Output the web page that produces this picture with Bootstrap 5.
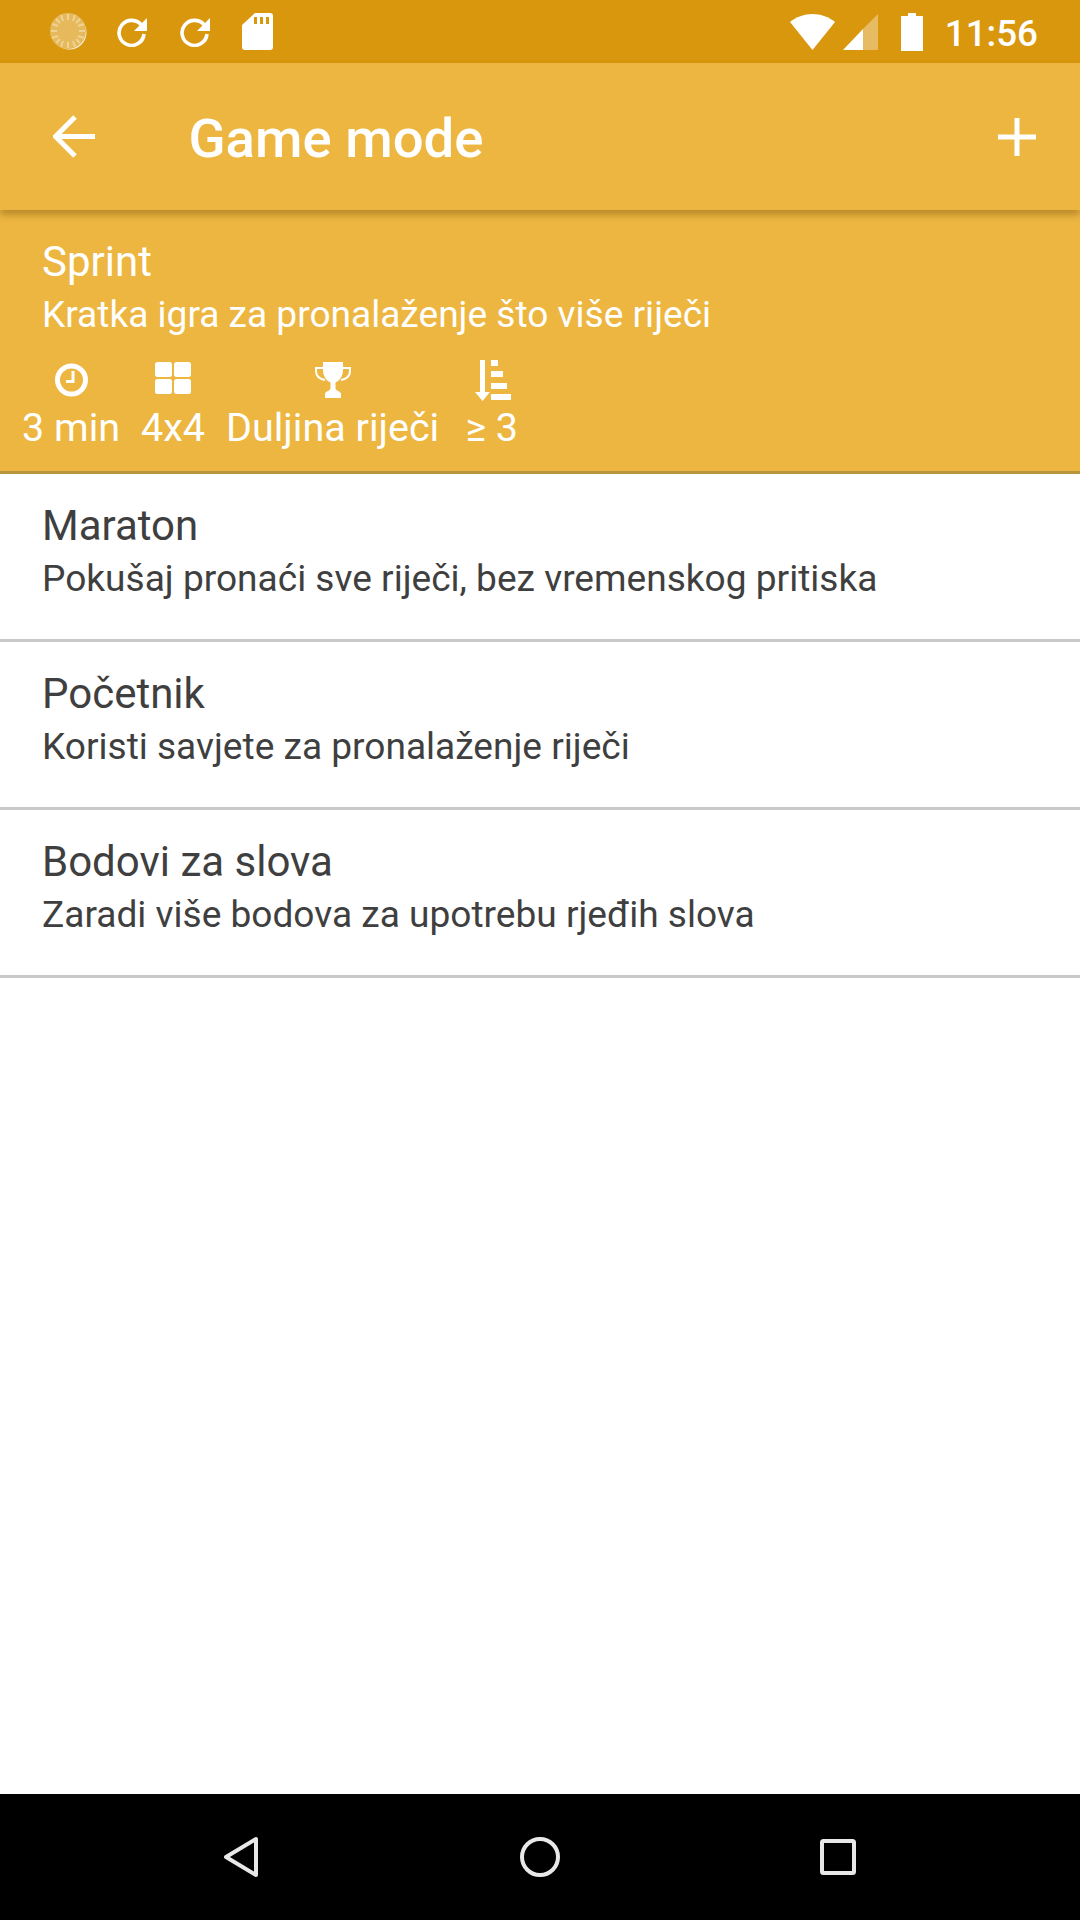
<!DOCTYPE html>
<html lang="en">
<head>
  <meta charset="UTF-8" />
  <meta name="viewport" content="width=device-width, initial-scale=1" />
  <title>Game mode</title>
  <link href="https://cdn.jsdelivr.net/npm/bootstrap@5.3.3/dist/css/bootstrap.min.css" rel="stylesheet" />
  <style>
    body {
      width: 1080px;
      height: 1920px;
      overflow: hidden;
      background-color: #fff;
      font-family: Roboto, sans-serif;
    }
    .status-bar {
      height: 63px;
      background-color: #d9970e;
      padding: 0 42px 0 50px;
      color: #fff;
    }
    .status-time {
      font-size: 36.75px;
      font-weight: 500;
      line-height: 1;
      margin: 5px 0 0 22px;
    }
    .app-bar {
      height: 147px;
      background-color: #edb640;
      color: #fff;
      padding: 0 44px 0 53px;
      box-shadow: 0 5px 7px rgba(90, 60, 0, .35);
      position: relative;
      z-index: 2;
    }
    .app-title {
      font-size: 54.5px;
      font-weight: 500;
      line-height: 1;
      margin: 4px 0 0 93.5px;
    }
    .mode-row {
      height: 168px;
      padding: 25px 42px 0;
      border-bottom: 3px solid #c9c9c9;
      color: #3f3f3f;
    }
    .mode-row.picked {
      height: 264px;
      background-color: #edb640;
      color: #fff;
      border-bottom-color: #b8953e;
    }
    .mode-name {
      font-size: 42px;
      line-height: 54px;
    }
    .mode-desc {
      font-size: 37.1px;
      line-height: 55px;
      margin-top: -2px;
    }
    .stat-row {
      margin: 18px 0 0 -20px;
      gap: 21px;
    }
    .stat-item {
      font-size: 39.5px;
      line-height: 50px;
    }
    .stat-item svg {
      height: 41px;
      display: block;
      margin-bottom: 2px;
    }
    .page-fill {
      height: 816px;
    }
    .nav-bar {
      height: 126px;
      background-color: #000;
    }
  </style>
</head>
<body>
  <div class="status-bar d-flex align-items-center">
    <svg width="37" height="37" viewBox="0 0 37 37">
      <circle cx="19.5" cy="19.5" r="17" fill="#fff" opacity=".9"/>
      <circle cx="18" cy="18" r="18" fill="#e6b95c"/>
      <g stroke="#f3dca8" stroke-width="2" opacity=".75">
        <path d="M18 1v6M18 29v6M1 18h6M29 18h6M6 6l4 4M26 26l4 4M30 6l-4 4M10 26l-4 4M11 2l2 6M25 2l-2 6M2 11l6 2M2 25l6-2M34 11l-6 2M34 25l-6-2M11 34l2-6M25 34l-2-6"/>
      </g>
    </svg>
    <svg width="32" height="30" viewBox="0 0 32 30" style="margin-left:29px">
      <path d="M26 9A12.5 12.5 0 1 0 28 17" fill="none" stroke="#fff" stroke-width="3.6"/>
      <path d="M31 1v13H18z" fill="#fff"/>
    </svg>
    <svg width="32" height="30" viewBox="0 0 32 30" style="margin-left:31px">
      <path d="M26 9A12.5 12.5 0 1 0 28 17" fill="none" stroke="#fff" stroke-width="3.6"/>
      <path d="M31 1v13H18z" fill="#fff"/>
    </svg>
    <svg width="31" height="37" viewBox="0 0 31 37" style="margin-left:31px">
      <path fill-rule="evenodd" d="M13 0h15a3 3 0 0 1 3 3v31a3 3 0 0 1-3 3H3a3 3 0 0 1-3-3V12zM12 4v7h3V4zM18 4v7h3V4zM24 4v7h3V4z" fill="#fff"/>
    </svg>
    <div class="ms-auto d-flex align-items-center">
      <svg width="45" height="36" viewBox="0 0 45 36">
        <path d="M22.5 0C31 0 39 3 45 8L22.5 36 0 8C6 3 14 0 22.5 0z" fill="#fff"/>
      </svg>
      <svg width="35" height="36" viewBox="0 0 35 36" style="margin-left:8px">
        <path d="M35 0v36H20V15z" fill="#fff" opacity=".35"/>
        <path d="M20 15v21H0z" fill="#fff"/>
      </svg>
      <svg width="22" height="38" viewBox="0 0 22 38" style="margin-left:23px">
        <path d="M7 0h8v3h7v35H0V3h7z" fill="#fff"/>
      </svg>
      <span class="status-time">11:56</span>
    </div>
  </div>

  <div class="app-bar d-flex align-items-center">
    <svg width="42" height="43" viewBox="0 0 42 43">
      <path d="M42 21.5H4M22 2L2.500 21.500 22 41" fill="none" stroke="#fff" stroke-width="5"/>
    </svg>
    <span class="app-title">Game mode</span>
    <svg width="38" height="38" viewBox="0 0 38 38" class="ms-auto">
      <path d="M19 0v38M0 19h38" stroke="#fff" stroke-width="5"/>
    </svg>
  </div>

  <div class="mode-row picked">
    <div class="mode-name">Sprint</div>
    <div class="mode-desc">Kratka igra za pronalaženje što više riječi</div>
    <div class="stat-row d-flex">
      <div class="stat-item d-flex flex-column align-items-center">
        <svg width="33" viewBox="0 0 33 41">
          <circle cx="16.500" cy="20" r="14" fill="none" stroke="#fff" stroke-width="5"/>
          <path d="M18 11v10.500h-7" fill="none" stroke="#fff" stroke-width="3"/>
        </svg>
        <span>3 min</span>
      </div>
      <div class="stat-item d-flex flex-column align-items-center">
        <svg width="36" viewBox="0 0 36 41">
          <rect x="0" y="2" width="17" height="15" rx="2.500" fill="#fff"/>
          <rect x="19" y="2" width="17" height="15" rx="2.500" fill="#fff"/>
          <rect x="0" y="19" width="17" height="15" rx="2.500" fill="#fff"/>
          <rect x="19" y="19" width="17" height="15" rx="2.500" fill="#fff"/>
        </svg>
        <span>4x4</span>
      </div>
      <div class="stat-item d-flex flex-column align-items-center">
        <svg width="36" viewBox="0 0 36 41">
          <path d="M8 2h20v8c0 7-4 11-7.500 12.500V28c0 3 4 2.500 5.500 5.500V38H10v-4.500c1.500-3 5.500-2.500 5.500-5.500v-5.500C12 21 8 17 8 10z" fill="#fff"/>
          <path d="M8 8H1v3c0 5 4 8 9 9M28 8h7v3c0 5-4 8-9 9" fill="none" stroke="#fff" stroke-width="2"/>
        </svg>
        <span>Duljina riječi</span>
      </div>
      <div class="stat-item d-flex flex-column align-items-center" style="margin-left:5px">
        <svg width="38" viewBox="0 0 38 41">
          <path d="M7 0h5v32h5L9.500 41 2 32h5z" fill="#fff"/>
          <rect x="18" y="0" width="7" height="6" fill="#fff"/>
          <rect x="18" y="11" width="12" height="6" fill="#fff"/>
          <rect x="18" y="23" width="16" height="6" fill="#fff"/>
          <rect x="18" y="34" width="20" height="6" fill="#fff"/>
        </svg>
        <span>≥ 3</span>
      </div>
    </div>
  </div>

  <div class="mode-row">
    <div class="mode-name">Maraton</div>
    <div class="mode-desc">Pokušaj pronaći sve riječi, bez vremenskog pritiska</div>
  </div>
  <div class="mode-row">
    <div class="mode-name">Početnik</div>
    <div class="mode-desc">Koristi savjete za pronalaženje riječi</div>
  </div>
  <div class="mode-row">
    <div class="mode-name">Bodovi za slova</div>
    <div class="mode-desc">Zaradi više bodova za upotrebu rjeđih slova</div>
  </div>

  <div class="page-fill"></div>

  <div class="nav-bar d-flex align-items-center">
    <svg width="36" height="42" viewBox="0 0 36 42" style="margin-left:223px">
      <path d="M33 3v36L3 21z" fill="none" stroke="#e8e8e8" stroke-width="4" stroke-linejoin="round"/>
    </svg>
    <svg width="40" height="42" viewBox="0 0 40 42" style="margin-left:261px">
      <circle cx="20" cy="21" r="18" fill="none" stroke="#e8e8e8" stroke-width="4"/>
    </svg>
    <svg width="36" height="36" viewBox="0 0 36 36" style="margin-left:260px">
      <rect x="2" y="2" width="32" height="32" rx="1.500" fill="none" stroke="#e8e8e8" stroke-width="4"/>
    </svg>
  </div>

  <script src="https://cdn.jsdelivr.net/npm/bootstrap@5.3.3/dist/js/bootstrap.bundle.min.js"></script>
</body>
</html>
